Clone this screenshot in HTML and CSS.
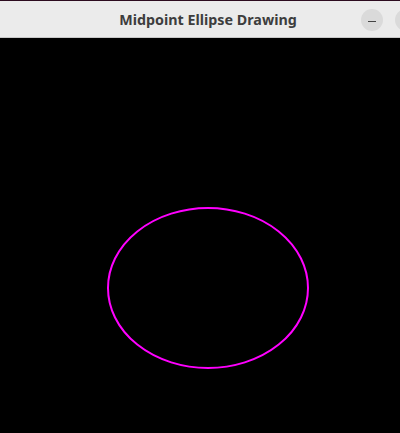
FILE: index.html
```html
<!DOCTYPE html>
<html>
<head>
<meta charset="utf-8">
<link rel="stylesheet" href="styles.css">
</head>
<body>
<div class="window">
  <header class="titlebar">
    <div class="title">Midpoint Ellipse Drawing</div>
    <div class="buttons">
      <div class="btn"><span class="dash"></span></div>
      <div class="btn"></div>
    </div>
  </header>
  <main class="canvas">
    <svg width="400" height="395" viewBox="0 38 400 395" xmlns="http://www.w3.org/2000/svg">
      <ellipse cx="208" cy="288" rx="100" ry="80" fill="none" stroke="#ff00ff" stroke-width="2"/>
    </svg>
  </main>
</div>
</body>
</html>
```
FILE: styles.css
```css
html, body {
  margin: 0;
  padding: 0;
  background: #000;
}
.window {
  width: 400px;
  height: 433px;
  display: flex;
  flex-direction: column;
  overflow: hidden;
}
.titlebar {
  height: 36px;
  flex: none;
  background: #ebebeb;
  border-top: 1px solid #2c0b1f;
  border-bottom: 1px solid #c8c8c8;
  display: flex;
  align-items: center;
  justify-content: center;
  position: relative;
}
.title {
  font-family: "Noto Sans", "DejaVu Sans", sans-serif;
  font-weight: bold;
  font-size: 14.3px;
  color: #3d3d3d;
  margin-left: 16px;
}
.buttons {
  position: absolute;
  left: 361px;
  top: 8px;
  display: flex;
  gap: 12px;
}
.btn {
  width: 22px;
  height: 22px;
  border-radius: 50%;
  background: #dadada;
  display: flex;
  align-items: center;
  justify-content: center;
}
.dash {
  width: 8px;
  height: 1px;
  background: #444;
  margin-top: 3px;
}
.canvas {
  flex: 1;
  background: #000;
}
.canvas svg {
  display: block;
}
```
